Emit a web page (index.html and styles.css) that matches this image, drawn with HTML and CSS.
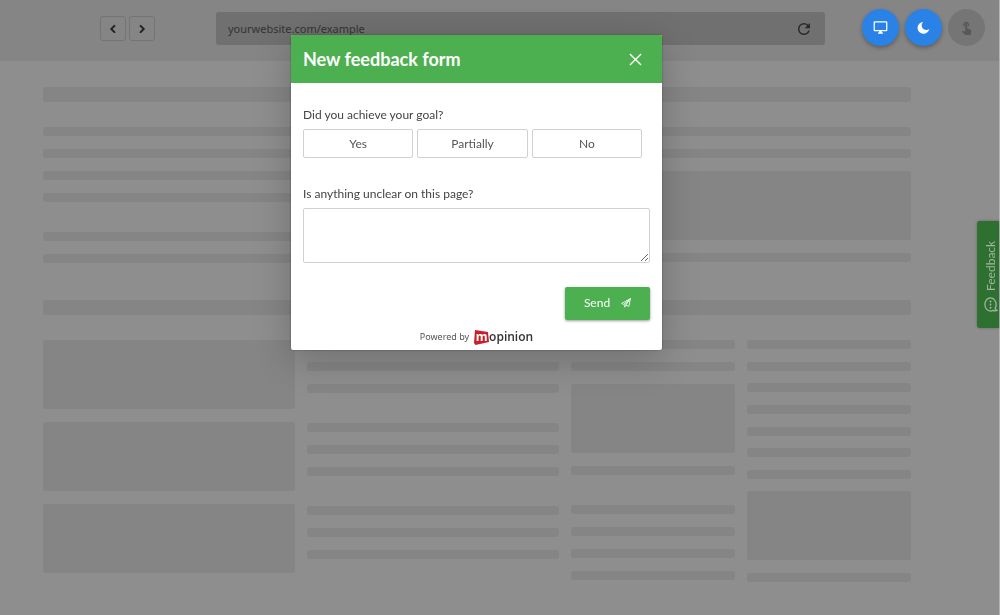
FILE: index.html
```html
<!DOCTYPE html>
<html lang="en">
<head>
<meta charset="utf-8">
<meta name="viewport" content="width=device-width, initial-scale=1">
<title>Feedback form preview</title>
<link rel="stylesheet" href="styles.css">
</head>
<body>
<header class="toolbar">
  <nav class="history" aria-label="History">
    <button class="nav-btn" type="button" aria-label="Back"><svg viewBox="0 0 24 24"><path d="M15.4 7.4 14 6l-6 6 6 6 1.400-1.400L10.800 12z"/></svg></button>
    <button class="nav-btn" type="button" aria-label="Forward"><svg viewBox="0 0 24 24"><path d="M10 6 8.600 7.400 13.200 12l-4.600 4.600L10 18l6-6z"/></svg></button>
  </nav>
  <div class="address">
    <input class="address-input" type="text" value="yourwebsite.com/example" aria-label="Address">
    <button class="reload" type="button" aria-label="Reload"><svg viewBox="0 0 24 24"><path d="M17.650 6.350A7.960 7.960 0 0 0 12 4a8 8 0 1 0 7.730 10h-2.080A6 6 0 1 1 12 6c1.660 0 3.140.69 4.220 1.780L13 11h7V4z"/></svg></button>
  </div>
  <div class="modes">
    <button class="mode" type="button" aria-label="Desktop"><svg viewBox="0 0 24 24"><path d="M21 2H3a2 2 0 0 0-2 2v12c0 1.100.9 2 2 2h7v2H8v2h8v-2h-2v-2h7a2 2 0 0 0 2-2V4a2 2 0 0 0-2-2zm0 14H3V4h18z"/></svg></button>
    <button class="mode" type="button" aria-label="Dark mode"><svg viewBox="0 0 24 24"><path d="M11.500 3A9.500 9.500 0 1 0 21.300 14.200 6.300 6.300 0 1 1 11.500 3z"/></svg></button>
    <button class="mode mode-off" type="button" aria-label="Touch"><svg viewBox="0 0 24 24"><path d="M9 11.240V7.500a2.500 2.500 0 0 1 5 0v3.740a4.500 4.500 0 1 0-5 0zm9.840 4.630-4.540-2.260c-.17-.07-.35-.11-.54-.11H13v-6a1.500 1.500 0 0 0-3 0v10.740l-3.430-.72c-.08-.01-.15-.03-.24-.03-.31 0-.59.13-.79.33l-.79.800 4.940 4.940c.27.27.65.44 1.060.44h6.790c.75 0 1.330-.55 1.440-1.280l.75-5.270c.010-.07.020-.14.020-.2 0-.62-.38-1.160-.91-1.380z"/></svg></button>
  </div>
</header>

<main class="page" aria-hidden="true">
  <section class="section">
    <div class="bar heading"></div>
    <div class="halves">
      <div class="groups">
        <div class="group"><div class="bar"></div><div class="bar"></div><div class="bar"></div><div class="bar"></div></div>
        <div class="group"><div class="bar"></div><div class="bar"></div></div>
      </div>
      <div class="group"><div class="bar"></div><div class="bar"></div><div class="bar block"></div><div class="bar"></div></div>
    </div>
  </section>
  <section class="section">
    <div class="bar heading"></div>
    <div class="columns">
      <div class="group"><div class="bar block"></div><div class="bar block"></div><div class="bar block"></div></div>
      <div class="groups">
        <div class="group"><div class="bar"></div><div class="bar"></div><div class="bar"></div></div>
        <div class="group"><div class="bar"></div><div class="bar"></div><div class="bar"></div></div>
        <div class="group"><div class="bar"></div><div class="bar"></div><div class="bar"></div></div>
      </div>
      <div class="groups">
        <div class="group"><div class="bar"></div><div class="bar"></div><div class="bar block"></div><div class="bar"></div></div>
        <div class="group"><div class="bar"></div><div class="bar"></div><div class="bar"></div><div class="bar"></div></div>
      </div>
      <div class="spread"><div class="bar"></div><div class="bar"></div><div class="bar"></div><div class="bar"></div><div class="bar"></div><div class="bar"></div><div class="bar"></div><div class="bar block"></div><div class="bar"></div></div>
    </div>
  </section>
</main>

<button class="feedback-tab" type="button">
  <svg viewBox="0 0 24 24"><path d="M12 1.500c5.200 0 9 4.500 9 10.500 0 2.400-.6 4.500-1.700 6.200.8 1.500 1.900 2.600 3.200 3.300-2.200.9-4.300.8-6.200-.1-1.300.7-2.800 1.100-4.300 1.100-5.200 0-9-4.500-9-10.500S6.800 1.500 12 1.500z"/><path class="dots" d="M12 7v.1M12 12v.1M12 17v.1"/></svg>
  <span>Feedback</span>
</button>

<div class="overlay">
  <form class="modal" role="dialog" aria-labelledby="form-title">
    <div class="modal-head">
      <h1 class="modal-title" id="form-title">New feedback form</h1>
      <button class="close" type="button" aria-label="Close"><svg viewBox="0 0 14 14"><path d="M1 1l12 12M13 1 1 13"/></svg></button>
    </div>
    <div class="modal-body">
      <fieldset class="field">
        <legend class="label">Did you achieve your goal?</legend>
        <div class="options">
          <label class="option"><input type="radio" name="goal" value="yes">Yes</label>
          <label class="option"><input type="radio" name="goal" value="partially">Partially</label>
          <label class="option"><input type="radio" name="goal" value="no">No</label>
        </div>
      </fieldset>
      <div class="field">
        <label class="label" for="unclear">Is anything unclear on this page?</label>
        <textarea class="textarea" id="unclear"></textarea>
      </div>
      <button class="send" type="submit">Send
        <svg viewBox="0 0 24 24"><path d="M22.500 1.500 1.500 13l5 2.500zM22.500 1.500 19 20l-7.500-3zM22.500 1.500 9 16.500V22l3-4.500"/></svg>
      </button>
      <div class="powered">
        <span>Powered by</span>
        <a class="brand" href="#"><span class="brand-m"><svg viewBox="0 0 15 15"><path d="M1 0 14 2 15 12 1.500 15 0 13z"/></svg><span>m</span></span>opinion</a>
      </div>
    </div>
  </form>
</div>
</body>
</html>
```

FILE: styles.css
```css
* { box-sizing: border-box; }

body {
  margin: 0;
  min-height: 100vh;
  background: #8e8e8e;
  border-right: 1px solid #b4b4b4;
  font-family: Lato, "Open Sans", sans-serif;
  font-size: 12px;
  color: #444;
}

button { padding: 0; border: 0; background: none; font: inherit; color: inherit; cursor: pointer; }
svg { display: block; fill: currentColor; }

/* Browser toolbar */
.toolbar {
  display: flex;
  align-items: flex-start;
  padding: 9px 14px 0 100px;
  height: 61px;
  background: #858585;
}
.history { display: flex; gap: 3px; margin: 7px 61px 0 0; }
.nav-btn {
  display: grid;
  place-items: center;
  width: 26px;
  height: 25px;
  border: 1px solid #747474;
  border-radius: 3px;
  color: #1c1c1c;
}
.nav-btn svg { width: 16px; height: 16px; stroke: currentColor; }
.address {
  display: flex;
  flex: 1;
  align-items: center;
  height: 33px;
  margin: 3px 37px 0 0;
  padding: 0 12px;
  border-radius: 3px;
  background: #707070;
}
.address-input {
  flex: 1;
  min-width: 0;
  padding: 0;
  border: 0;
  background: none;
  color: #333;
  font: 11px/16px "Noto Sans", sans-serif;
}
.reload { color: #2a2a2a; }
.reload svg { width: 18px; height: 18px; }
.modes { display: flex; gap: 6px; }
.mode {
  display: grid;
  place-items: center;
  width: 37px;
  height: 37px;
  border-radius: 50%;
  background: #2b82e6;
  box-shadow: 0 2px 4px rgba(0, 0, 0, .3);
  color: #fff;
}
.mode svg { width: 15px; height: 15px; }
.mode-off { background: #757575; box-shadow: none; color: #585858; }

/* Page skeleton */
.page {
  display: grid;
  gap: 37px;
  padding: 26px 88px 25px 43px;
}
.section { display: grid; gap: 25px; }
.halves { display: grid; grid-template-columns: 1fr 1fr; gap: 12px; align-items: start; }
.columns { display: grid; grid-template-columns: 252fr 252fr 164fr 164fr; gap: 12px; min-height: 242px; }
.groups { display: flex; flex-direction: column; gap: 30px; }
.group { display: flex; flex-direction: column; gap: 13px; }
.spread { display: flex; flex-direction: column; justify-content: space-between; gap: 12px; }
.bar { height: 9px; border-radius: 3px; background: #858585; }
.heading { height: 15px; }
.block { height: 69px; }

/* Feedback tab */
.feedback-tab {
  position: fixed;
  top: 221px;
  right: 1px;
  display: flex;
  align-items: center;
  gap: 6px;
  width: 22px;
  height: 107px;
  padding: 16px 6px 16px 1px;
  writing-mode: vertical-rl;
  transform: rotate(180deg);
  border-radius: 0 3px 3px 0;
  background: #2d702f;
  box-shadow: 0 0 3px rgba(0, 0, 0, .3);
  color: #a3b4a3;
}
.feedback-tab svg {
  flex: none;
  width: 15px;
  height: 15px;
  fill: none;
  stroke: currentColor;
  stroke-width: 2;
  transform: rotate(180deg);
}
.feedback-tab .dots { stroke-width: 3; stroke-linecap: round; }

/* Modal */
.overlay {
  position: fixed;
  inset: 0;
  display: flex;
  justify-content: center;
  align-items: flex-start;
  padding: 35px 47px 0 0;
  pointer-events: none;
}
.modal {
  width: 371px;
  border-radius: 2px;
  overflow: hidden;
  background: #fff;
  box-shadow: 0 10px 36px rgba(0, 0, 0, .22), 0 0 2px rgba(0, 0, 0, .4);
  pointer-events: auto;
}
.modal-head {
  display: flex;
  justify-content: space-between;
  align-items: center;
  height: 48px;
  padding: 0 20px 0 12px;
  background: #4caf50;
  color: #fff;
}
.modal-title { margin: 0; font-size: 18px; line-height: 24px; font-weight: 700; }
.close svg { width: 13px; height: 13px; fill: none; stroke: currentColor; stroke-width: 1.5; }
.modal-body { display: flex; flex-direction: column; gap: 24px; padding: 24px 12px 5px; }
.field { display: block; min-width: 0; margin: 0; padding: 0; border: 0; }
fieldset.field { margin-bottom: 4px; }
.label { display: block; margin: 0 0 6px; padding: 0; line-height: 16px; }
.options { display: flex; gap: 4px; padding-right: 8px; }
.option {
  position: relative;
  display: grid;
  flex: 1;
  place-items: center;
  height: 29px;
  border: 1px solid #d0d0d0;
  border-radius: 2px;
  color: #555;
}
.option input { position: absolute; inset: 0; width: 100%; height: 100%; margin: 0; opacity: 0; }
.textarea {
  display: block;
  width: 100%;
  height: 55px;
  padding: 6px;
  border: 1px solid #d0d0d0;
  border-radius: 2px;
  font: inherit;
  resize: vertical;
}
.send {
  display: flex;
  align-items: center;
  justify-content: center;
  align-self: flex-end;
  gap: 11px;
  width: 85px;
  height: 33px;
  padding-bottom: 2px;
  border-radius: 2px;
  background: #4caf50;
  box-shadow: 0 1px 3px rgba(0, 0, 0, .4);
  color: #fff;
}
.send svg { width: 10px; height: 10px; fill: none; stroke: currentColor; stroke-width: 2; stroke-linejoin: round; }
.powered {
  display: flex;
  justify-content: center;
  align-items: center;
  gap: 5px;
  margin-top: -15px;
  font: 9px/16px "Noto Sans", sans-serif;
  color: #555;
}
.brand {
  display: flex;
  align-items: center;
  font: 600 12px/16px "Open Sans", sans-serif;
  color: #333;
  text-decoration: none;
}
.brand-m { display: grid; place-items: center; width: 15px; color: #fff; font-weight: 700; }
.brand-m > * { grid-area: 1 / 1; }
.brand-m svg { width: 15px; height: 15px; color: #c8202b; }
```
